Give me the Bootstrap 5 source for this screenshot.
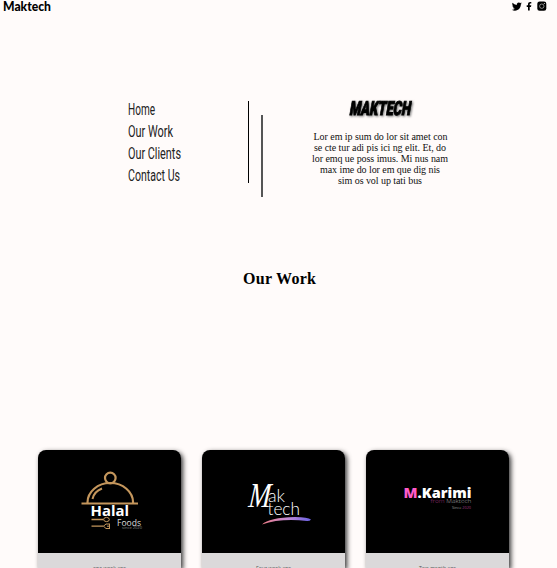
<!DOCTYPE html>
<html lang="en">
<head>
<meta charset="utf-8">
<meta name="viewport" content="width=device-width, initial-scale=1">
<title>Maktech</title>
<link href="https://cdn.jsdelivr.net/npm/bootstrap@5.3.0/dist/css/bootstrap.min.css" rel="stylesheet">
<style>
body{background:#fffbfa;color:#000;height:568px;overflow:hidden;font-family:"Liberation Serif",serif}
svg{display:block;overflow:visible}
.topbar{height:14px;padding:0 10px 0 3px}
.hero{padding:87px 0 0 128px;height:184px}
.menu{width:120px}
.menu a{height:22px}
.menu text{font:16px Roboto,sans-serif;fill:#222}
.rule-a{width:1px;height:82px;background:#000}
.rule-b{width:2px;height:82px;margin:14px 0 0 12px;background:#555}
.about{width:140px;margin-left:47px}
.about p{font-size:10px;line-height:11px;margin-top:13px}
.about p text{fill:#111}
.brand{filter:drop-shadow(1.5px 1.5px 1px #777)}
.section-title{font-size:16px;line-height:20px;margin-top:71px;padding-left:2px}
.works{margin-top:161px;padding-left:38px;gap:21px}
.work{width:143px;height:118px;border:0;border-radius:8px 8px 0 0;background:#dbd9da;box-shadow:2px 2px 5px #333;flex:none}
.work-art{height:103px;background:#000;border-radius:8px 8px 0 0}
.work-age text{font:5.500px "Open Sans",sans-serif;fill:#555}
.sans{font-family:"Open Sans",sans-serif}
</style>
<script src="https://cdn.jsdelivr.net/npm/bootstrap@5.3.0/dist/js/bootstrap.bundle.min.js"></script>
</head>
<body>
<header class="topbar d-flex justify-content-between">
  <svg width="50" height="14"><text x="0" y="11" textLength="48" lengthAdjust="spacingAndGlyphs" font-family="Lato,sans-serif" font-size="12.500" font-weight="900">Maktech</text></svg>
  <div class="d-flex">
    <svg width="12" height="14" viewBox="0 0 12 14"><path transform="translate(.8 1.200) scale(.63)" d="M5 15c6 0 9.300-5 9.300-9.300v-.4A6.700 6.700 0 0 0 16 3.500a6.500 6.500 0 0 1-1.900.5 3.300 3.300 0 0 0 1.400-1.800 6.500 6.500 0 0 1-2 .8A3.300 3.300 0 0 0 7.900 6 9.300 9.300 0 0 1 1.100 2.600a3.300 3.300 0 0 0 1 4.400 3.300 3.300 0 0 1-1.500-.4A3.300 3.300 0 0 0 3.300 9.800a3.300 3.300 0 0 1-1.500.1 3.300 3.300 0 0 0 3.100 2.200A6.600 6.600 0 0 1 0 13.500 9.300 9.300 0 0 0 5 15"/></svg>
    <svg width="12" height="14" viewBox="0 0 12 14"><path d="M5 10.500V7H3.700V5.300H5V4.200C5 2.600 5.900 1.900 7.200 1.900h1.100v1.500h-.7c-.7 0-.9.300-.9.900v1h1.600L8 7H6.700v3.500z"/></svg>
    <svg width="12" height="14" viewBox="0 0 12 14"><rect x="2.300" y="1.500" width="9" height="9.300" rx="2.300"/><circle cx="6.800" cy="6.200" r="2.200" fill="none" stroke="#fff" stroke-opacity=".65" stroke-width=".8"/><circle cx="9.300" cy="3.600" r=".5" fill="#fff"/></svg>
  </div>
</header>
<main>
  <section class="hero d-flex align-items-start">
    <nav class="menu d-flex flex-column">
      <a href="#"><svg width="60" height="22"><text x="0" y="14" textLength="27" lengthAdjust="spacingAndGlyphs">Home</text></svg></a>
      <a href="#"><svg width="60" height="22"><text x="0" y="14" textLength="45" lengthAdjust="spacingAndGlyphs">Our Work</text></svg></a>
      <a href="#"><svg width="60" height="22"><text x="0" y="14" textLength="53" lengthAdjust="spacingAndGlyphs">Our Clients</text></svg></a>
      <a href="#"><svg width="60" height="22"><text x="0" y="14" textLength="52" lengthAdjust="spacingAndGlyphs">Contact Us</text></svg></a>
    </nav>
    <div class="rule-a"></div>
    <div class="rule-b"></div>
    <div class="about">
      <svg class="brand" width="140" height="17"><text transform="translate(39 13.800) skewX(-10)" textLength="61" lengthAdjust="spacingAndGlyphs" font-family="Roboto,sans-serif" font-size="19.500" font-weight="900" stroke="#000" stroke-width="1">MAKTECH</text></svg>
      <p class="mb-0">
        <svg width="140" height="55"><text><tspan x="3.500" y="9" textLength="134">Lor em ip sum do lor sit amet con</tspan><tspan x="4" y="20" textLength="132">se cte tur adi pis ici ng elit. Et, do</tspan><tspan x="2" y="31" textLength="136">lor emq ue poss imus. Mi nus nam</tspan><tspan x="10" y="42" textLength="120">max ime do lor em que dig nis</tspan><tspan x="28" y="53" textLength="84">sim os vol up tati bus</tspan></text></svg>
      </p>
    </div>
  </section>
  <h2 class="section-title mb-0 d-flex justify-content-center fw-bold"><svg width="73" height="20"><text x="0" y="15" textLength="73">Our Work</text></svg></h2>
  <section class="works d-flex">
    <article class="card work">
      <div class="work-art">
        <svg class="sans" width="143" height="103" viewBox="0 0 143 103">
          <g fill="none" stroke="#c4965c" stroke-width="2.200"><circle cx="72.300" cy="28" r="5.300"/><path d="M49.500 52.500a22.800 19.500 0 0 1 45.600 0M43.500 53.500h56.500"/><path d="M54.500 49q1.500-7.500 9.500-10.500" stroke-width="2"/></g>
          <g fill="none" stroke="#c4965c"><path d="M53.500 69.500h12M53.500 76.200h12" stroke-width="1.300"/><ellipse cx="68.500" cy="69.500" rx="2.800" ry="2.100"/><path d="M72 74h-4l-2.500 2.200 2.500 2.300h4M69 76.200h3M71.500 74v4.500"/></g>
          <text x="52.500" y="66" textLength="38.500" lengthAdjust="spacingAndGlyphs" font-size="15" font-weight="700" fill="#fff">Halal</text>
          <text x="79" y="75.500" textLength="24" lengthAdjust="spacingAndGlyphs" font-size="9.500" fill="#ddd">Foods</text>
          <text x="84" y="78.800" textLength="20" lengthAdjust="spacingAndGlyphs" font-size="3.800" fill="#888">since 2020</text>
        </svg>
      </div>
      <div class="work-age"><svg width="143" height="15"><text x="55" y="16.800" textLength="33" lengthAdjust="spacingAndGlyphs">one week ago</text></svg></div>
    </article>
    <article class="card work">
      <div class="work-art">
        <svg width="143" height="103" viewBox="0 0 143 103">
          <defs><linearGradient id="swoosh"><stop stop-color="#ed7c85"/><stop offset=".5" stop-color="#c68bd2"/><stop offset="1" stop-color="#6961e5"/></linearGradient></defs>
          <text transform="translate(46 56.500) skewX(-5)" font-family="Liberation Serif,serif" font-style="italic" font-size="35" textLength="22" lengthAdjust="spacingAndGlyphs" fill="#fff">M</text>
          <g font-family="Lato,sans-serif" fill="#fff"><text x="66" y="51.500" font-size="17" font-weight="300" textLength="17" lengthAdjust="spacingAndGlyphs">ak</text><text x="65.500" y="64.500" font-size="18" font-weight="300" textLength="32.500" lengthAdjust="spacingAndGlyphs">tech</text></g>
          <path d="M60 74.500q7-7 33-7.500 13 0 16 2.500-1 1.600-4 1.500-26-3-45 3.500" fill="url(#swoosh)"/>
        </svg>
      </div>
      <div class="work-age"><svg width="143" height="15"><text x="54" y="16.800" textLength="35" lengthAdjust="spacingAndGlyphs">Four week ago</text></svg></div>
    </article>
    <article class="card work">
      <div class="work-art">
        <svg class="sans" width="143" height="103" viewBox="0 0 143 103">
          <text x="37.500" y="48" font-size="14" font-weight="800" textLength="68" lengthAdjust="spacingAndGlyphs" fill="#fff"><tspan fill="#ff5cc8">M</tspan>.Karimi</text>
          <text x="64.500" y="53.300" font-size="5.500" font-weight="300" textLength="41" lengthAdjust="spacingAndGlyphs" fill="#aaa"><tspan fill="#a33682">from</tspan> Maktech</text>
          <text x="86" y="58.500" font-size="4" textLength="19" lengthAdjust="spacingAndGlyphs" fill="#999">Since <tspan fill="#a33682">2020</tspan></text>
        </svg>
      </div>
      <div class="work-age"><svg width="143" height="15"><text x="53" y="16.800" textLength="37" lengthAdjust="spacingAndGlyphs">Two month ago</text></svg></div>
    </article>
  </section>
</main>
</body>
</html>
